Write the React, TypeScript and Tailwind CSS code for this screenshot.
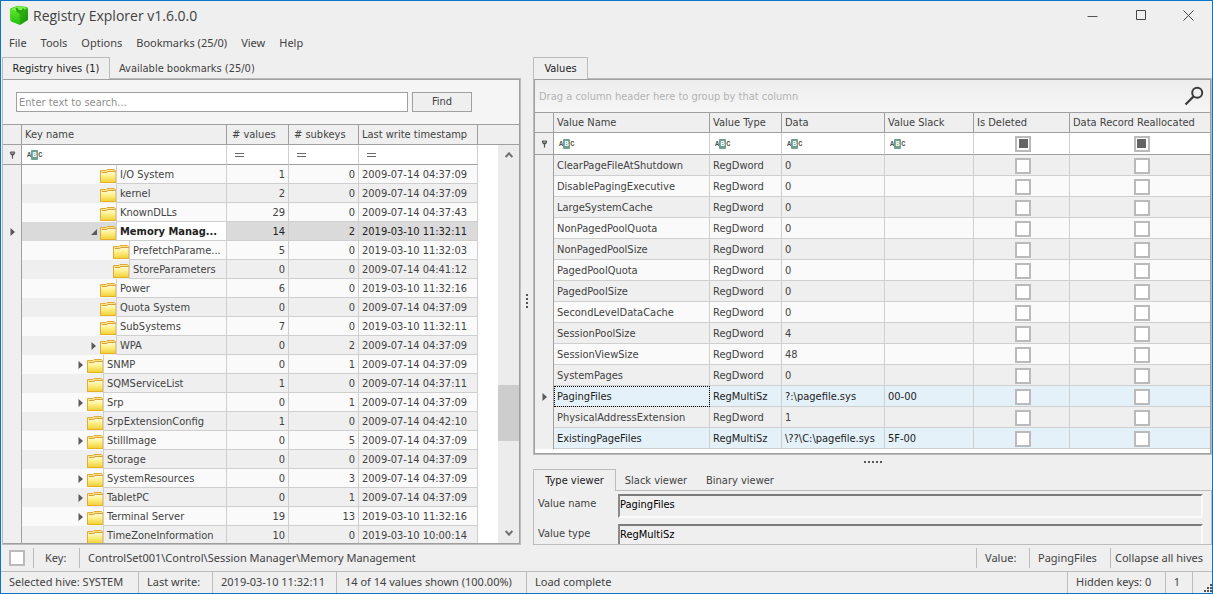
import type { ReactNode } from "react";

type TreeRow = {
  name: string;
  depth: 0 | 1 | 2;
  node?: "open" | "closed";
  values: number;
  subkeys: number;
  time: string;
  selected?: boolean;
};

const tree: TreeRow[] = [
  { name: "I/O System", depth: 1, values: 1, subkeys: 0, time: "2009-07-14 04:37:09" },
  { name: "kernel", depth: 1, values: 2, subkeys: 0, time: "2009-07-14 04:37:09" },
  { name: "KnownDLLs", depth: 1, values: 29, subkeys: 0, time: "2009-07-14 04:37:43" },
  { name: "Memory Manag...", depth: 1, node: "open", values: 14, subkeys: 2, time: "2019-03-10 11:32:11", selected: true },
  { name: "PrefetchParame...", depth: 2, values: 5, subkeys: 0, time: "2019-03-10 11:32:03" },
  { name: "StoreParameters", depth: 2, values: 0, subkeys: 0, time: "2009-07-14 04:41:12" },
  { name: "Power", depth: 1, values: 6, subkeys: 0, time: "2019-03-10 11:32:16" },
  { name: "Quota System", depth: 1, values: 0, subkeys: 0, time: "2009-07-14 04:37:09" },
  { name: "SubSystems", depth: 1, values: 7, subkeys: 0, time: "2019-03-10 11:32:11" },
  { name: "WPA", depth: 1, node: "closed", values: 0, subkeys: 2, time: "2009-07-14 04:37:09" },
  { name: "SNMP", depth: 0, node: "closed", values: 0, subkeys: 1, time: "2009-07-14 04:37:09" },
  { name: "SQMServiceList", depth: 0, values: 1, subkeys: 0, time: "2009-07-14 04:37:11" },
  { name: "Srp", depth: 0, node: "closed", values: 0, subkeys: 1, time: "2009-07-14 04:37:09" },
  { name: "SrpExtensionConfig", depth: 0, values: 1, subkeys: 0, time: "2009-07-14 04:42:10" },
  { name: "StillImage", depth: 0, node: "closed", values: 0, subkeys: 5, time: "2009-07-14 04:37:09" },
  { name: "Storage", depth: 0, values: 0, subkeys: 0, time: "2009-07-14 04:37:09" },
  { name: "SystemResources", depth: 0, node: "closed", values: 0, subkeys: 3, time: "2009-07-14 04:37:09" },
  { name: "TabletPC", depth: 0, node: "closed", values: 0, subkeys: 1, time: "2009-07-14 04:37:09" },
  { name: "Terminal Server", depth: 0, node: "closed", values: 19, subkeys: 13, time: "2019-03-10 11:32:16" },
  { name: "TimeZoneInformation", depth: 0, values: 10, subkeys: 0, time: "2019-03-10 10:00:14" },
];

type ValueRow = { name: string; type: string; data: string; slack?: string; marked?: boolean; focused?: boolean };

const values: ValueRow[] = [
  { name: "ClearPageFileAtShutdown", type: "RegDword", data: "0" },
  { name: "DisablePagingExecutive", type: "RegDword", data: "0" },
  { name: "LargeSystemCache", type: "RegDword", data: "0" },
  { name: "NonPagedPoolQuota", type: "RegDword", data: "0" },
  { name: "NonPagedPoolSize", type: "RegDword", data: "0" },
  { name: "PagedPoolQuota", type: "RegDword", data: "0" },
  { name: "PagedPoolSize", type: "RegDword", data: "0" },
  { name: "SecondLevelDataCache", type: "RegDword", data: "0" },
  { name: "SessionPoolSize", type: "RegDword", data: "4" },
  { name: "SessionViewSize", type: "RegDword", data: "48" },
  { name: "SystemPages", type: "RegDword", data: "0" },
  { name: "PagingFiles", type: "RegMultiSz", data: "?:\\pagefile.sys", slack: "00-00", marked: true, focused: true },
  { name: "PhysicalAddressExtension", type: "RegDword", data: "1" },
  { name: "ExistingPageFiles", type: "RegMultiSz", data: "\\??\\C:\\pagefile.sys", slack: "5F-00", marked: true },
];

const indent = { 0: "w-[52px]", 1: "w-[65px]", 2: "w-[78px]" };

function Logo() {
  return (
    <svg width="20" height="21" viewBox="0 0 20 21" aria-hidden="true">
      <defs>
        <linearGradient id="front" x1="0" y1="0" x2="0" y2="1">
          <stop offset="0" stopColor="#5be82a" />
          <stop offset="1" stopColor="#22bd0c" />
        </linearGradient>
        <linearGradient id="side" x1="0" y1="0" x2="1" y2="1">
          <stop offset="0" stopColor="#39c016" />
          <stop offset="1" stopColor="#128a06" />
        </linearGradient>
      </defs>
      <path d="M1 4.5 Q1 3.6 2 3.3 L8 1 Q9 0.7 10 0.9 L17.6 2 Q18.8 2.3 18.8 3.4 L19 14 Q19 15 18.2 15.5 L12 19.4 Q11 20 10 19.6 L2.4 16.4 Q1.6 16 1.5 15 Z" fill="#35c312" />
      <path d="M1 4.5 L10.5 7.5 L11 19.8 L2.2 16.2 Q1.6 16 1.5 15 Z" fill="url(#front)" />
      <path d="M10.5 7.5 L18.7 3.4 L19 14.6 L11 19.8 Z" fill="url(#side)" />
      <path d="M1.4 4.3 L9 1 L18.5 2.8 L10.5 7.5 Z" fill="#7df04c" />
      <path d="M6.5 3.4 L8.5 2.4 L9.8 5 L12.5 5.2 L13.8 3.2 L15.2 3.6 L14.6 6.6 L10.8 9 L7.6 6.8 Z" fill="#2ba512" />
    </svg>
  );
}

function Folder() {
  return (
    <svg width="16" height="14" viewBox="0 0 16 14" className="shrink-0" aria-hidden="true">
      <defs>
        <linearGradient id="folder" x1="0" y1="0" x2="0" y2="1">
          <stop offset="0" stopColor="#fffbd0" />
          <stop offset="0.4" stopColor="#fdf08c" />
          <stop offset="1" stopColor="#f3d238" />
        </linearGradient>
      </defs>
      <path d="M0.5 13.5V1.5H6L7 0.5H14.5L15.5 1.5V13.5Z" fill="#fbe38a" stroke="#e2aa3a" />
      <path d="M1 4H6.5L8 3H15.5V13H1Z" fill="url(#folder)" />
      <path d="M2 3.5H6.5L8 2.5H15" stroke="#d9a036" fill="none" />
      <path d="M0.5 13.5H16" stroke="#e6b02a" />
    </svg>
  );
}

function Arrow() {
  return (
    <svg width="6" height="8" viewBox="0 0 6 8" className="shrink-0" aria-hidden="true">
      <path d="M0.5 0 L5 4 L0.5 8 Z" fill="#5a5a5a" />
    </svg>
  );
}

function OpenArrow() {
  return (
    <svg width="6" height="6" viewBox="0 0 6 6" className="shrink-0" aria-hidden="true">
      <path d="M6 0 V6 H0 Z" fill="#5a5a5a" />
    </svg>
  );
}

function Pin() {
  return (
    <svg width="7" height="8" viewBox="0 0 7 8" className="mx-auto" aria-hidden="true">
      <path d="M1.5 0.5h4l0.7 1-0.9 2.2-1.3 0.8h-1L1.7 3.7 0.8 1.5Z" fill="#555" />
      <path d="M2.5 2h2" stroke="#ccc" />
      <path d="M3.5 4v3.6" stroke="#555" strokeWidth="1.2" />
    </svg>
  );
}

function Abc() {
  return (
    <span className="flex items-center font-['Liberation_Mono',monospace] text-[7px] font-bold leading-[10px] text-[#555]" aria-hidden="true">
      A<span className="w-[7px] rounded-[1px] bg-[#6fa08d] text-center text-white">B</span>C
    </span>
  );
}

function Equals() {
  return (
    <svg width="9" height="4" viewBox="0 0 9 4" aria-hidden="true">
      <path d="M0 0.5h9M0 3.5h9" stroke="#6a6a6a" />
    </svg>
  );
}

function Check({ label, filled }: { label: string; filled?: boolean }) {
  return (
    <input
      type="checkbox"
      aria-label={label}
      className={
        "m-0 grid size-4 shrink-0 appearance-none place-items-center border-2 border-[#bababa] bg-white " +
        (filled ? "before:size-[9px] before:bg-[#646464]" : "")
      }
    />
  );
}

function Tab({ active, className = "", children }: { active?: boolean; className?: string; children: ReactNode }) {
  return (
    <button
      type="button"
      role="tab"
      aria-selected={!!active}
      className={
        "flex items-center justify-center whitespace-nowrap " +
        (active ? "border-x border-t border-[#bcbcbc] text-[#222] " : "border-b border-[#bcbcbc] pt-[2px] ") +
        className
      }
    >
      {children}
    </button>
  );
}

function HeadCell({ children, className = "" }: { children?: ReactNode; className?: string }) {
  return (
    <th className={"h-[21px] border-y border-r border-[#a0a0a0] bg-[#efefef] p-0 pl-[3px] text-left font-normal " + className}>
      {children}
    </th>
  );
}

function KeysPanel() {
  return (
    <section className="flex w-[520px] shrink-0 flex-col pl-px">
      <div role="tablist" className="flex h-[22px] shrink-0">
        <Tab active className="w-[108px]">Registry hives (1)</Tab>
        <Tab className="pl-[9px]">Available bookmarks (25/0)</Tab>
        <div className="flex-1 border-b border-[#bcbcbc]" />
      </div>
      <div className="flex min-h-0 flex-1 flex-col border-b border-l border-r border-[#bcbcbc]">
        <div className="flex min-h-0 flex-1 flex-col border-y border-r border-[#9f9f9f] bg-white">
          <div className="flex h-11 shrink-0 items-center gap-1 bg-[#f5f5f5] pl-[13px]">
            <input
              type="text"
              aria-label="Search keys"
              placeholder="Enter text to search..."
              className="h-5 w-[392px] border border-[#a0a0a0] bg-white px-[2px] outline-none placeholder:text-[#8e8e8e]"
            />
            <button type="button" className="h-5 w-[60px] border border-[#a0a0a0] bg-[#efefef]">
              Find
            </button>
          </div>
          <div className="flex min-h-0 flex-1">
            <div className="w-[475px] shrink-0 overflow-hidden">
              <table className="w-full table-fixed border-separate border-spacing-0">
                <colgroup>
                  <col className="w-[19px]" />
                  <col />
                  <col className="w-[62px]" />
                  <col className="w-[70px]" />
                  <col className="w-[119px]" />
                </colgroup>
                <thead>
                  <tr>
                    <HeadCell />
                    <HeadCell>Key name</HeadCell>
                    <HeadCell className="pl-[5px]"># values</HeadCell>
                    <HeadCell className="pl-[5px]"># subkeys</HeadCell>
                    <HeadCell>Last write timestamp</HeadCell>
                  </tr>
                  <tr className="h-5">
                    <td className="border-b border-r border-[#a0a0a0] bg-[#efefef] p-0"><Pin /></td>
                    <td className="border-b border-r border-b-[#a0a0a0] border-r-[#cfcfcf] p-0 pl-[5px]"><Abc /></td>
                    <td className="border-b border-r border-b-[#a0a0a0] border-r-[#cfcfcf] p-0 pl-2"><Equals /></td>
                    <td className="border-b border-r border-b-[#a0a0a0] border-r-[#cfcfcf] p-0 pl-2"><Equals /></td>
                    <td className="border-b border-r border-b-[#a0a0a0] border-r-[#cfcfcf] p-0 pl-2"><Equals /></td>
                  </tr>
                </thead>
                <tbody>
                  {tree.map((r, i) => {
                    const bg = r.selected ? "bg-[#dadada] text-[#222]" : i % 2 ? "bg-[#efefef]" : "bg-[#fafafa]";
                    const cell = "h-[19px] border-b border-r border-[#cfcfcf] p-0 pt-[2px] ";
                    return (
                      <tr key={r.name} className={bg}>
                        <td className="h-[19px] border-r border-[#a0a0a0] bg-[#efefef] p-0">
                          {r.selected && <div className="flex justify-center pl-[2px]"><Arrow /></div>}
                        </td>
                        <td className="h-[19px] border-r border-[#cfcfcf] p-0">
                          <div className="flex h-[19px]">
                            <div className={"shrink-0 " + indent[r.depth]} />
                            <div className="flex w-[13px] shrink-0 items-center justify-center pt-px">
                              {r.node === "closed" && <Arrow />}
                              {r.node === "open" && <OpenArrow />}
                            </div>
                            <div className="flex w-4 shrink-0 items-end pb-px"><Folder /></div>
                            <div
                              className={
                                "min-w-0 flex-1 whitespace-nowrap border-b border-l border-[#cfcfcf] pl-[3px] pt-[2px] " +
                                (r.selected ? "bg-white font-bold" : "")
                              }
                            >
                              {r.name}
                            </div>
                          </div>
                        </td>
                        <td className={cell + "pr-[3px] text-right"}>{r.values}</td>
                        <td className={cell + "pr-[3px] text-right"}>{r.subkeys}</td>
                        <td className={cell + "pl-[3px]"}>{r.time}</td>
                      </tr>
                    );
                  })}
                </tbody>
              </table>
            </div>
            <div className="flex flex-1 flex-col">
              <div className="h-[21px] shrink-0 border-y border-[#a0a0a0] bg-[#efefef]" />
              <div className="flex w-[21px] flex-1 flex-col self-end bg-[#ececec]">
                <button type="button" aria-label="Scroll up" className="flex h-5 items-center justify-center">
                  <svg width="8" height="6" viewBox="0 0 8 6"><path d="M0.7 5 L4 1.3 L7.3 5" fill="none" stroke="#707070" strokeWidth="2" /></svg>
                </button>
                <div className="flex-[219]" />
                <div className="h-14 bg-[#cdcdcd]" />
                <div className="flex-[82]" />
                <button type="button" aria-label="Scroll down" className="flex h-5 items-center justify-center">
                  <svg width="8" height="6" viewBox="0 0 8 6"><path d="M0.7 1 L4 4.7 L7.3 1" fill="none" stroke="#707070" strokeWidth="2" /></svg>
                </button>
              </div>
            </div>
          </div>
        </div>
      </div>
    </section>
  );
}

function ValuesPanel() {
  const filter = "h-[22px] border-b border-r border-b-[#a0a0a0] border-r-[#cfcfcf] bg-white p-0 ";
  return (
    <>
      <div role="tablist" className="flex h-[22px] shrink-0">
        <Tab active className="w-[55px]">Values</Tab>
        <div className="flex-1 border-b border-[#bcbcbc]" />
      </div>
      <div className="shrink-0 border-x border-b border-[#bcbcbc]">
        <div className="border border-[#9f9f9f] bg-white pb-1">
          <div className="flex h-8 items-center justify-between bg-linear-to-b from-[#ededed] to-[#f6f6f6] pl-1 pr-[6px] text-[#b3b3b3]">
            <span className="pt-[2px]">Drag a column header here to group by that column</span>
            <button type="button" aria-label="Find" className="p-0">
              <svg width="20" height="20" viewBox="0 0 20 20">
                <circle cx="13.2" cy="6.8" r="5" fill="none" stroke="#3c3c3c" strokeWidth="2" />
                <path d="M9.4 10.6 L1.5 18.5" stroke="#3c3c3c" strokeWidth="2.2" />
              </svg>
            </button>
          </div>
          <table className="w-full table-fixed border-separate border-spacing-0">
            <colgroup>
              <col className="w-[19px]" />
              <col className="w-[156px]" />
              <col className="w-[72px]" />
              <col className="w-[103px]" />
              <col className="w-[89px]" />
              <col className="w-[96px]" />
              <col />
            </colgroup>
            <thead>
              <tr>
                <HeadCell />
                <HeadCell>Value Name</HeadCell>
                <HeadCell>Value Type</HeadCell>
                <HeadCell>Data</HeadCell>
                <HeadCell>Value Slack</HeadCell>
                <HeadCell>Is Deleted</HeadCell>
                <HeadCell className="border-r-0">Data Record Reallocated</HeadCell>
              </tr>
              <tr>
                <td className="h-[22px] border-b border-r border-[#a0a0a0] bg-[#efefef] p-0"><Pin /></td>
                <td className={filter + "pl-[5px]"}><Abc /></td>
                <td className={filter + "pl-[5px]"}><Abc /></td>
                <td className={filter + "pl-[5px]"}><Abc /></td>
                <td className={filter + "pl-[5px]"}><Abc /></td>
                <td className={filter}><div className="flex justify-center pl-[3px]"><Check filled label="Filter Is Deleted" /></div></td>
                <td className={filter + "border-r-0"}><div className="flex justify-center pl-[3px]"><Check filled label="Filter Data Record Reallocated" /></div></td>
              </tr>
            </thead>
            <tbody>
              {values.map((r, i) => {
                const bg = r.marked ? "bg-[#e5f1f9] text-[#1c1c1c]" : i % 2 ? "bg-[#fafafa]" : "bg-[#efefef]";
                const box = "h-[21px] border-b border-r border-[#cfcfcf] p-0 ";
                const cell = box + "pl-[3px] pt-[2px] ";
                return (
                  <tr key={r.name} className={bg}>
                    <td className="h-[21px] border-r border-[#a0a0a0] bg-[#efefef] p-0">
                      {r.focused && <div className="flex justify-center pl-[2px]"><Arrow /></div>}
                    </td>
                    <td className={cell + (r.focused ? "outline-1 -outline-offset-1 outline-dotted outline-black" : "")}>{r.name}</td>
                    <td className={cell}>{r.type}</td>
                    <td className={cell}>{r.data}</td>
                    <td className={cell}>{r.slack}</td>
                    <td className={box}><div className="flex h-5 items-end justify-center pb-px pl-[3px]"><Check label={r.name + " is deleted"} /></div></td>
                    <td className={box + "border-r-0"}><div className="flex h-5 items-end justify-center pb-px pl-[3px]"><Check label={r.name + " data record reallocated"} /></div></td>
                  </tr>
                );
              })}
            </tbody>
          </table>
        </div>
      </div>
    </>
  );
}

function ViewerField({ id, label, value }: { id: string; label: string; value: string }) {
  return (
    <div className="flex">
      <label htmlFor={id} className="w-[84px] shrink-0 pl-1 pt-px leading-[18px]">{label}</label>
      <input
        id={id}
        readOnly
        value={value}
        className="h-6 min-w-0 flex-1 border-2 border-b-[#fafafa] border-l-[#8a8a8a] border-r-[#fafafa] border-t-[#7c7c7c] bg-[#efefef] pb-[3px] text-black outline-none"
      />
    </div>
  );
}

function Viewer() {
  return (
    <div className="flex min-h-0 flex-1 flex-col">
      <div role="tablist" className="flex h-[22px] shrink-0">
        <Tab active className="w-[83px]">Type viewer</Tab>
        <Tab className="w-[80px]">Slack viewer</Tab>
        <Tab className="w-[88px]">Binary viewer</Tab>
        <div className="flex-1 border-b border-[#bcbcbc]" />
      </div>
      <div className="flex min-h-0 flex-1 flex-col gap-[6px] overflow-hidden border-x border-b border-[#bcbcbc] pr-2 pt-[3px]">
        <ViewerField id="value-name" label="Value name" value="PagingFiles" />
        <ViewerField id="value-type" label="Value type" value="RegMultiSz" />
      </div>
    </div>
  );
}

export default function App() {
  return (
    <div className="flex h-screen flex-col overflow-hidden border border-[#0a74c8] bg-[#efefef] font-['DejaVu_Sans_Condensed','DejaVu_Sans',sans-serif] text-[11px] leading-4 text-[#424242]">
      <header className="flex h-[30px] shrink-0 items-center pb-px pl-2 font-['Open_Sans',sans-serif] text-[14px]">
        <Logo />
        <h1 className="flex-1 pl-1">Registry Explorer v1.6.0.0</h1>
        <button type="button" aria-label="Minimize" className="flex w-12 justify-center">
          <svg width="11" height="11" viewBox="0 0 11 11"><path d="M0.5 6.5h10" stroke="#555" /></svg>
        </button>
        <button type="button" aria-label="Maximize" className="flex w-12 justify-center">
          <svg width="11" height="11" viewBox="0 0 11 11"><path d="M1.5 0.5h9v9h-9z" fill="none" stroke="#444" /></svg>
        </button>
        <button type="button" aria-label="Close" className="flex w-12 justify-center">
          <svg width="11" height="11" viewBox="0 0 11 11"><path d="M0.5 0.5l10 10M10.5 0.5l-10 10" stroke="#444" /></svg>
        </button>
      </header>
      <nav className="flex h-[26px] shrink-0 items-center gap-[14px] pb-[3px] pl-2 font-['Noto_Sans',sans-serif]">
        {["File", "Tools", "Options", "Bookmarks (25/0)", "View", "Help"].map((m) => (
          <button key={m} type="button">{m}</button>
        ))}
      </nav>
      <main className="flex min-h-0 flex-1">
        <KeysPanel />
        <div className="flex w-3 shrink-0 items-center justify-center">
          <svg width="2" height="14" viewBox="0 0 2 14" aria-hidden="true">
            <path d="M1 0v14" stroke="#555" strokeWidth="2" strokeDasharray="2 2" />
          </svg>
        </div>
        <section className="flex min-w-0 flex-1 flex-col">
          <ValuesPanel />
          <div className="flex h-[14px] shrink-0 items-center justify-center">
            <svg width="18" height="2" viewBox="0 0 18 2" aria-hidden="true">
              <path d="M0 1h18" stroke="#555" strokeWidth="2" strokeDasharray="2 2" />
            </svg>
          </div>
          <Viewer />
        </section>
      </main>
      <div className="flex h-[26px] shrink-0 items-center font-['Noto_Sans',sans-serif]">
        <div className="flex w-8 justify-center"><Check label="Lock key" /></div>
        <div className="h-5 w-[47px] border-x border-[#bcbcbc] pl-[11px] leading-5">Key:</div>
        <div className="flex-1 pl-2">ControlSet001\Control\Session Manager\Memory Management</div>
        <div className="h-5 w-[53px] border-l border-[#bcbcbc] pl-2 leading-5">Value:</div>
        <div className="h-5 w-[81px] border-l border-[#bcbcbc] pl-2 leading-5">PagingFiles</div>
        <button type="button" className="h-5 w-[102px] border-l border-[#bcbcbc] pl-1 text-left leading-5">Collapse all hives</button>
      </div>
      <footer className="flex h-[22px] shrink-0 border-t border-[#bcbcbc] font-['Noto_Sans',sans-serif] leading-[19px]">
        <div className="w-[138px] border-r border-[#bcbcbc] pl-2">Selected hive: SYSTEM</div>
        <div className="w-[74px] border-r border-[#bcbcbc] pl-2">Last write:</div>
        <div className="w-[124px] border-r border-[#bcbcbc] pl-2">2019-03-10 11:32:11</div>
        <div className="w-[190px] border-r border-[#bcbcbc] pl-2">14 of 14 values shown (100.00%)</div>
        <div className="flex-1 pl-2">Load complete</div>
        <div className="w-[98px] border-l border-[#bcbcbc] pl-2">Hidden keys: 0</div>
        <div className="w-7 border-x border-[#bcbcbc] pr-1 text-center">1</div>
        <div className="flex w-[19px] items-end justify-end">
          <svg width="9" height="9" viewBox="0 0 9 9" aria-hidden="true">
            <path d="M7 0h2v2h-2zM4 3h2v2h-2zM7 3h2v2h-2zM1 6h2v2h-2zM4 6h2v2h-2zM7 6h2v2h-2z" fill="#555" />
          </svg>
        </div>
      </footer>
    </div>
  );
}
